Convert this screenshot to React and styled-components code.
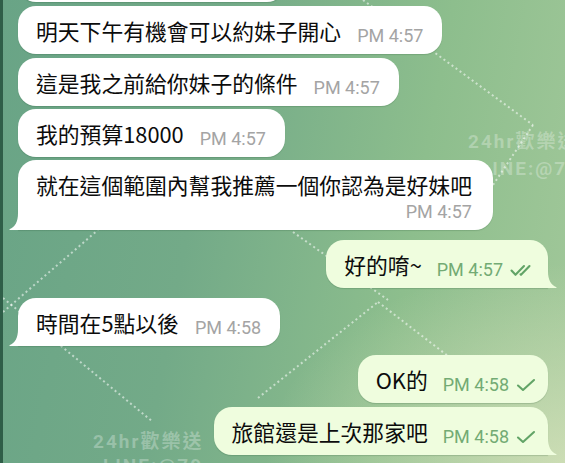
import styled, { createGlobalStyle } from 'styled-components';

const GlobalStyle = createGlobalStyle`
  html, body {
    margin: 0;
    padding: 0;
    background: #6fa687;
  }
  * {
    box-sizing: border-box;
  }
`;

const Screen = styled.div`
  position: relative;
  width: 565px;
  height: 463px;
  overflow: hidden;
  border-left: 3px solid #2f5e48;
  background:
    radial-gradient(ellipse 300px 200px at 100% 100%, rgba(222, 230, 192, 0.7), rgba(222, 230, 192, 0) 100%),
    linear-gradient(100deg, #69a486 0%, #73aa88 35%, #8dbe8d 70%, #a2c89a 100%);
`;

const Backdrop = styled.div`
  position: absolute;
  inset: 0;
  pointer-events: none;
`;

const Watermark = styled.div`
  position: absolute;
  left: ${(p) => p.$x}px;
  top: ${(p) => p.$y}px;
  font-family: Roboto, 'Noto Sans CJK TC', sans-serif;
  font-weight: 700;
  font-size: 19px;
  letter-spacing: 2px;
  white-space: nowrap;
  color: rgba(255, 255, 255, 0.28);
`;

const Feed = styled.div`
  position: relative;
  z-index: 1;
  height: 100%;
  display: flex;
  flex-direction: column;
  justify-content: flex-end;
  padding: 0 17px 8px 15px;
`;

const Row = styled.div`
  display: flex;
  flex-shrink: 0;
  justify-content: ${(p) => (p.$out ? 'flex-end' : 'flex-start')};
  margin-top: ${(p) => p.$gap}px;
`;

const Bubble = styled.div`
  position: relative;
  display: flex;
  flex-direction: ${(p) => (p.$stacked ? 'column' : 'row')};
  align-items: ${(p) => (p.$stacked ? 'stretch' : 'flex-end')};
  padding: ${(p) => (p.$out ? '12px 12px 10px 18px' : p.$stacked ? '12px 21px 10px 18px' : '12px 19px 10px 18px')};
  background: ${(p) => (p.$out ? '#effdde' : '#ffffff')};
  border-radius: 18px;
  ${(p) => p.$tail && (p.$out ? 'border-bottom-right-radius: 0;' : 'border-bottom-left-radius: 0;')}
  box-shadow: 0 1px 1px rgba(30, 70, 40, 0.18);
`;

const Stub = styled(Bubble)`
  width: 267px;
  height: 48px;
`;

const Text = styled.span`
  font-family: 'Noto Sans CJK TC', 'Noto Sans', sans-serif;
  font-size: 21.8px;
  line-height: 26px;
  color: #0c0c0c;
  white-space: nowrap;
`;

const Meta = styled.span`
  display: flex;
  align-items: center;
  gap: 7px;
  flex-shrink: 0;
  margin-left: ${(p) => (p.$stacked ? 0 : p.$out ? 15 : 16)}px;
  margin-top: ${(p) => (p.$stacked ? 6 : 0)}px;
  align-self: flex-end;
  font-family: Roboto, 'Liberation Sans', sans-serif;
  font-size: 18px;
  line-height: 16px;
  color: ${(p) => (p.$out ? '#73ab74' : '#a4a4a4')};
  white-space: nowrap;
`;

const TailSvg = styled.svg`
  position: absolute;
  bottom: 0;
  ${(p) => (p.$out ? 'right: -9px;' : 'left: -9px;')}
  width: 11px;
  height: 17px;
`;

const Tail = ({ out }) => (
  <TailSvg $out={out} viewBox="0 0 11 17">
    {out ? (
      <path d="M2 0 C2 9 5 14 10.5 16.2 Q11 17 10 17 L0 17 L0 0 Z" fill="#effdde" />
    ) : (
      <path d="M9 0 C9 9 6 14 0.5 16.2 Q0 17 1 17 L11 17 L11 0 Z" fill="#ffffff" />
    )}
  </TailSvg>
);

const Check = ({ double }) =>
  double ? (
    <svg width="26" height="13" viewBox="0 0 26 13" fill="none" stroke="#62a467" strokeWidth="2.1" strokeLinecap="round" strokeLinejoin="round">
      <path d="M1.5 6.5 L5.5 10.8 L14 2" />
      <path d="M10.5 10.3 L11 10.8 L19.5 2" />
    </svg>
  ) : (
    <svg width="20" height="14" viewBox="0 0 20 14" fill="none" stroke="#62a467" strokeWidth="2.1" strokeLinecap="round" strokeLinejoin="round">
      <path d="M2 7.5 L7 12 L18 2" />
    </svg>
  );

const messages = [
  { text: '明天下午有機會可以約妹子開心', time: 'PM 4:57', gap: 4 },
  { text: '這是我之前給你妹子的條件', time: 'PM 4:57', gap: 4 },
  { text: '我的預算18000', time: 'PM 4:57', gap: 3 },
  { text: '就在這個範圍內幫我推薦一個你認為是好妹吧', time: 'PM 4:57', gap: 3, tail: true, stacked: true },
  { text: '好的唷~', time: 'PM 4:57', gap: 10, out: true, tail: true, read: true },
  { text: '時間在5點以後', time: 'PM 4:58', gap: 10, tail: true },
  { text: 'OK的', time: 'PM 4:58', gap: 9, out: true },
  { text: '旅館還是上次那家吧', time: 'PM 4:58', gap: 4, out: true, tail: true },
];

const lines = [
  [360, 0, 530, 125],
  [530, 125, 470, 215],
  [0, 312, 95, 230],
  [0, 298, 150, 422],
  [255, 398, 375, 302],
  [375, 302, 445, 356],
  [290, 232, 385, 300],
];

export default function App() {
  return (
    <>
      <GlobalStyle />
      <Screen>
        <Backdrop>
          <svg width="565" height="463">
            {lines.map(([x1, y1, x2, y2], i) => (
              <line
                key={i}
                x1={x1}
                y1={y1}
                x2={x2}
                y2={y2}
                stroke="rgba(255,255,255,0.55)"
                strokeWidth="2"
                strokeDasharray="2 3"
              />
            ))}
          </svg>
          <Watermark $x={465} $y={126}>24hr歡樂送</Watermark>
          <Watermark $x={477} $y={157}>LINE:@79</Watermark>
          <Watermark $x={90} $y={426}>24hr歡樂送</Watermark>
          <Watermark $x={100} $y={454}>LINE:@79</Watermark>
        </Backdrop>
        <Feed>
          <Row $gap={0}>
            <Stub />
          </Row>
          {messages.map((m, i) => (
            <Row key={i} $out={m.out} $gap={m.gap}>
              <Bubble $out={m.out} $tail={m.tail} $stacked={m.stacked}>
                <Text>{m.text}</Text>
                <Meta $out={m.out} $stacked={m.stacked}>
                  {m.time}
                  {m.out && <Check double={m.read} />}
                </Meta>
                {m.tail && <Tail out={m.out} />}
              </Bubble>
            </Row>
          ))}
        </Feed>
      </Screen>
    </>
  );
}
